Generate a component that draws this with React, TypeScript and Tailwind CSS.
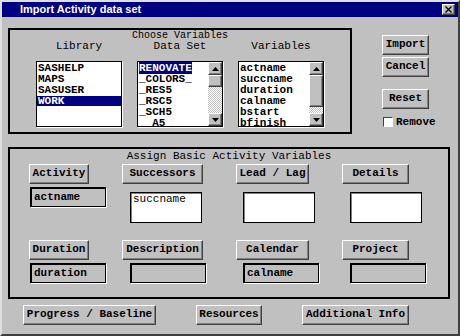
import React from "react";

const raised =
  "border border-t-white border-l-white border-r-[#404040] border-b-[#404040] shadow-[inset_-1px_-1px_0_#808080] bg-[#c0c0c0]";

function Btn({ w, children }: { w: string; children: React.ReactNode }) {
  return (
    <div className={`h-[20px] ${w} ${raised} flex items-center justify-center font-bold leading-none`}>
      <span className="-mt-[1px]">{children}</span>
    </div>
  );
}

function Field({ ml, text }: { ml: string; text?: string }) {
  return (
    <div
      className={`${ml} mt-[3px] w-[76px] h-[20px] border-t-2 border-l-2 border-r border-b border-black shadow-[1px_1px_0_#ffffff] bg-[#c0c0c0] font-bold pl-[2px] leading-[16px]`}
    >
      {text}
    </div>
  );
}

function WBox({ ml, text }: { ml: string; text?: string }) {
  return (
    <div
      className={`${ml} mt-[8px] w-[72px] h-[31px] border border-black shadow-[inset_1px_1px_0_#808080] bg-white pl-[2px] leading-[13px]`}
    >
      {text}
    </div>
  );
}

function Arrow({ up }: { up?: boolean }) {
  return (
    <div className={`h-[13px] w-full ${raised} flex items-center justify-center`}>
      <svg width="7" height="4" viewBox="0 0 7 4">
        {up ? <polygon points="0,4 7,4 3.5,0" fill="#000" /> : <polygon points="0,0 7,0 3.5,4" fill="#000" />}
      </svg>
    </div>
  );
}

function ScrollBar({ thumb, track }: { thumb: string; track: string }) {
  return (
    <div className="w-[14px] h-full flex flex-col">
      <Arrow up />
      <div className={`${thumb} w-full ${raised}`} />
      <div
        className={`${track} w-full bg-[repeating-conic-gradient(#c0c0c0_0_25%,#ffffff_0_50%)] bg-[length:2px_2px]`}
      />
      <Arrow />
    </div>
  );
}

export default function App() {
  return (
    <div className="w-[460px] h-[336px] bg-[#c0c0c0] border-2 border-t-[#dfdfdf] border-l-[#dfdfdf] border-r-[#404040] border-b-[#404040] font-['Liberation_Mono',monospace] text-[11px] text-black overflow-hidden select-none">
      {/* title bar */}
      <div className="h-[15px] bg-[#000080] flex items-center justify-between pl-[18px] pr-[3px]">
        <span className="font-['Liberation_Sans',Arial,sans-serif] font-bold text-white text-[11px] leading-none">
          Import Activity data set
        </span>
        <div className={`w-[13px] h-[11px] ${raised} flex items-center justify-center`}>
          <svg width="7" height="7" viewBox="0 0 7 7">
            <path d="M0.5 0.5 L6.5 6.5 M6.5 0.5 L0.5 6.5" stroke="#000" strokeWidth="1.4" />
          </svg>
        </div>
      </div>

      {/* top section */}
      <div className="flex mt-[11px] pl-[6px]">
        <div className="w-[344px] h-[106px] border-2 border-black flex flex-col">
          <div className="mt-[1px] h-[10px] text-[10px] leading-[10px] text-center">Choose Variables</div>
          <div className="flex pl-[26px] gap-[15px] h-[10px] leading-[10px]">
            <div className="w-[86px] text-center">Library</div>
            <div className="w-[86px] text-center">Data Set</div>
            <div className="w-[86px] text-center">Variables</div>
          </div>
          <div className="mt-[10px] flex pl-[26px] gap-[15px] font-bold leading-[11px]">
            {/* Library */}
            <div className="w-[86px] h-[66px] border border-black shadow-[1px_1px_0_#ffffff] bg-white overflow-hidden pt-[1px]">
              <div className="pl-[1px]">SASHELP</div>
              <div className="pl-[1px]">MAPS</div>
              <div className="pl-[1px]">SASUSER</div>
              <div className="pl-[1px] bg-[#000080] text-white h-[10px] leading-[11px]">WORK</div>
            </div>
            {/* Data Set */}
            <div className="w-[86px] h-[66px] border border-black shadow-[1px_1px_0_#ffffff] bg-white overflow-hidden flex">
              <div className="flex-1 pt-[1px] overflow-hidden">
                <div className="pl-[1px]">
                  <span className="bg-[#000080] text-white">RENOVATE</span>
                </div>
                <div className="pl-[1px]">_COLORS_</div>
                <div className="pl-[1px]">_RES5</div>
                <div className="pl-[1px]">_RSC5</div>
                <div className="pl-[1px]">_SCH5</div>
                <div className="pl-[1px]">_&nbsp;A5</div>
              </div>
              <ScrollBar thumb="h-[12px]" track="flex-1" />
            </div>
            {/* Variables */}
            <div className="w-[86px] h-[66px] border border-black shadow-[1px_1px_0_#ffffff] bg-white overflow-hidden flex">
              <div className="flex-1 pt-[1px] overflow-hidden">
                <div className="pl-[1px]">actname</div>
                <div className="pl-[1px]">succname</div>
                <div className="pl-[1px]">duration</div>
                <div className="pl-[1px]">calname</div>
                <div className="pl-[1px]">bstart</div>
                <div className="pl-[1px]">bfinish</div>
              </div>
              <ScrollBar thumb="h-[32px]" track="flex-1" />
            </div>
          </div>
        </div>

        <div className="ml-[30px] pt-[7px] flex flex-col">
          <Btn w="w-[47px]">Import</Btn>
          <div className="mt-[2px]">
            <Btn w="w-[47px]">Cancel</Btn>
          </div>
          <div className="mt-[12px]">
            <Btn w="w-[47px]">Reset</Btn>
          </div>
          <div className="mt-[8px] flex items-center ml-[1px]">
            <div className="w-[10px] h-[10px] bg-white border border-t-[#404040] border-l-[#404040] border-r-white border-b-white" />
            <span className="ml-[3px] font-bold leading-[10px]">Remove</span>
          </div>
        </div>
      </div>

      {/* bottom group */}
      <div className="mt-[13px] ml-[6px] w-[442px] h-[152px] border-2 border-black flex flex-col">
        <div className="mt-[2px] leading-[10px] text-center">Assign Basic Activity Variables</div>
        <div className="mt-[3px] flex pl-[19px]">
          <div className="w-[93px] flex flex-col">
            <Btn w="w-[60px]">Activity</Btn>
            <Field ml="ml-[1px]" text="actname" />
          </div>
          <div className="w-[114px] flex flex-col">
            <Btn w="w-[81px]">Successors</Btn>
            <WBox ml="ml-[8px]" text="succname" />
          </div>
          <div className="w-[106px] flex flex-col">
            <Btn w="w-[73px]">Lead / Lag</Btn>
            <WBox ml="ml-[7px]" />
          </div>
          <div className="flex flex-col">
            <Btn w="w-[67px]">Details</Btn>
            <WBox ml="ml-[8px]" />
          </div>
        </div>
        <div className="mt-[17px] flex pl-[19px]">
          <div className="w-[93px] flex flex-col">
            <Btn w="w-[60px]">Duration</Btn>
            <Field ml="ml-[1px]" text="duration" />
          </div>
          <div className="w-[114px] flex flex-col">
            <Btn w="w-[81px]">Description</Btn>
            <Field ml="ml-[8px]" />
          </div>
          <div className="w-[106px] flex flex-col">
            <Btn w="w-[73px]">Calendar</Btn>
            <Field ml="ml-[7px]" text="calname" />
          </div>
          <div className="flex flex-col">
            <Btn w="w-[67px]">Project</Btn>
            <Field ml="ml-[8px]" />
          </div>
        </div>
      </div>

      {/* bottom buttons */}
      <div className="mt-[6px] flex pl-[21px] gap-[40px]">
        <Btn w="w-[133px]">Progress / Baseline</Btn>
        <Btn w="w-[66px]">Resources</Btn>
        <Btn w="w-[107px]">Additional Info</Btn>
      </div>
    </div>
  );
}
